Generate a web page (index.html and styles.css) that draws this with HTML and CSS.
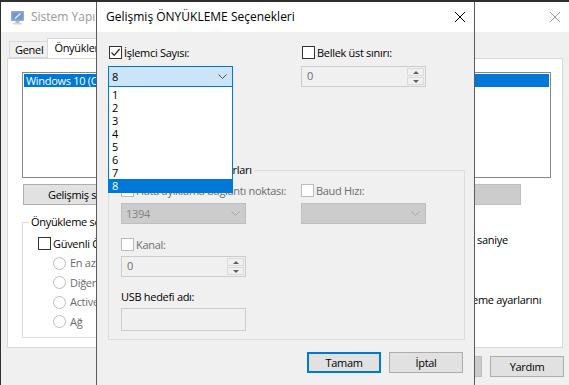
FILE: index.html
```html
<!DOCTYPE html>
<html lang="tr">
<head>
    <meta charset="UTF-8">
    <title>Sistem Yapılandırması - Gelişmiş ÖNYÜKLEME Seçenekleri</title>
    <link rel="stylesheet" href="styles.css">
</head>
<body>
<div class="desk">

    <!-- Arkadaki pencere: Sistem Yapılandırması -->
    <div class="win win-back">
        <div class="titlebar">
            <svg class="app-icon" width="15" height="15" viewBox="0 0 15 15">
                <rect x="1" y="1" width="13" height="10" rx="1" fill="#7d8aa0"/>
                <rect x="2.5" y="2.5" width="10" height="7" fill="#3a76d6"/>
                <path d="M5 8.5 L10.5 3.5" stroke="#e4eeff" stroke-width="1.3"/>
                <rect x="5.5" y="11" width="4" height="2" fill="#9aa3ad"/>
                <rect x="3" y="13" width="9" height="1.5" fill="#c5cad0"/>
            </svg>
            <span class="title">Sistem Yapılandırması</span>
            <svg class="close" width="10" height="10" viewBox="0 0 10 10">
                <path d="M0 0 L10 10 M10 0 L0 10" stroke="currentColor" stroke-width="1"/>
            </svg>
        </div>
        <div class="back-body">
            <div class="tabs">
                <div class="tab">Genel</div>
                <div class="tab active">Önyükleme</div>
            </div>
            <div class="page">
                <div class="listbox">
                    <div class="list-row sel">Windows 10 (C:)</div>
                </div>
                <div class="page-buttons">
                    <button class="btn adv">Gelişmiş seçenekler...</button>
                    <button class="btn del" disabled>Sil</button>
                </div>
                <div class="boot-area">
                    <fieldset class="group boot-group">
                        <legend>Önyükleme seçenekleri</legend>
                        <div class="boot-list">
                            <label class="chk"><span class="box"></span>Güvenli Önyükleme</label>
                            <label class="rad off"><span class="radio"></span>En az</label>
                            <label class="rad off"><span class="radio"></span>Diğer kabuk</label>
                            <label class="rad off"><span class="radio"></span>Active Directory onarımı</label>
                            <label class="rad off"><span class="radio"></span>Ağ</label>
                        </div>
                    </fieldset>
                    <div class="timeout">
                        <div class="timeout-row">
                            <div class="txt white"></div>
                            <span>saniye</span>
                        </div>
                        <div class="perm">
                            <span class="box"></span>
                            <span class="perm-text">Tüm önyükleme ayarlarını<br>kalıcı yap</span>
                        </div>
                    </div>
                </div>
            </div>
            <div class="win-buttons">
                <button class="btn">Tamam</button>
                <button class="btn">İptal</button>
                <button class="btn" disabled>Uygula</button>
                <button class="btn">Yardım</button>
            </div>
        </div>
    </div>

    <!-- Öndeki iletişim kutusu -->
    <div class="win dlg">
        <div class="titlebar">
            <span class="title">Gelişmiş ÖNYÜKLEME Seçenekleri</span>
            <svg class="close" width="10" height="10" viewBox="0 0 10 10">
                <path d="M0 0 L10 10 M10 0 L0 10" stroke="currentColor" stroke-width="1"/>
            </svg>
        </div>
        <div class="dlg-body">
            <div class="top">
                <div class="field">
                    <label class="chk">
                        <span class="box">
                            <svg width="11" height="11" viewBox="0 0 11 11"><path d="M1.5 5.5 L4.2 8.3 L9.6 2" fill="none" stroke="#222" stroke-width="1.2"/></svg>
                        </span>İşlemci Sayısı:
                    </label>
                    <div class="combo open">
                        <span>8</span>
                        <svg width="9" height="5" viewBox="0 0 9 5"><path d="M0.5 0.5 L4.5 4.5 L8.5 0.5" fill="none" stroke="#505050"/></svg>
                        <div class="drop">
                            <div>1</div>
                            <div>2</div>
                            <div>3</div>
                            <div>4</div>
                            <div>5</div>
                            <div>6</div>
                            <div>7</div>
                            <div class="sel">8</div>
                        </div>
                    </div>
                </div>
                <div class="field">
                    <label class="chk"><span class="box"></span>Bellek üst sınırı:</label>
                    <div class="spin off">
                        <span>0</span>
                        <div class="spin-btns"><i class="up"></i><i class="down"></i></div>
                    </div>
                </div>
            </div>

            <fieldset class="group debug-group">
                <legend>Genel hata ayıklama ayarları</legend>
                <div class="debug-grid">
                    <div class="col">
                        <label class="chk off"><span class="box"></span>Hata ayıklama bağlantı noktası:</label>
                        <div class="combo off">
                            <span>1394</span>
                            <svg width="9" height="5" viewBox="0 0 9 5"><path d="M0.5 0.5 L4.5 4.5 L8.5 0.5" fill="none" stroke="#a6a6a6"/></svg>
                        </div>
                        <label class="chk off kanal"><span class="box"></span>Kanal:</label>
                        <div class="spin off">
                            <span>0</span>
                            <div class="spin-btns"><i class="up"></i><i class="down"></i></div>
                        </div>
                        <div class="line usb">USB hedefi adı:</div>
                        <div class="txt"></div>
                    </div>
                    <div class="col">
                        <label class="chk off"><span class="box"></span>Baud Hızı:</label>
                        <div class="combo off">
                            <span></span>
                            <svg width="9" height="5" viewBox="0 0 9 5"><path d="M0.5 0.5 L4.5 4.5 L8.5 0.5" fill="none" stroke="#a6a6a6"/></svg>
                        </div>
                    </div>
                </div>
            </fieldset>

            <div class="dlg-buttons">
                <button class="btn def">Tamam</button>
                <button class="btn">İptal</button>
            </div>
        </div>
    </div>

</div>
</body>
</html>
```

FILE: styles.css
```css
* { box-sizing: border-box; }
body { margin: 0; font: 11px/14px "Segoe UI", "Open Sans", sans-serif; letter-spacing: -0.3px; color: #000; }

.desk { position: relative; width: 569px; height: 385px; background: #2f2f2f; overflow: hidden; }

/* pencereler masaüstünde serbest durur */
.win { position: absolute; top: 2px; height: 383px; background: #f0f0f0; }
.win-back { left: 1px; width: 568px; z-index: 1; }
.dlg { left: 96px; width: 379px; z-index: 2; border-left: 1px solid #5a5a5a; border-right: 1px solid #5a5a5a; }

.titlebar { height: 30px; background: #fff; display: flex; align-items: center; font-size: 12px; letter-spacing: 0; }
.titlebar .title { flex: 1; }
.win-back .titlebar { padding: 0 9px 0 9px; color: #999; }
.win-back .app-icon { margin-right: 6px; opacity: .75; }
.dlg .titlebar { padding: 0 9px; }
.close { display: block; }

/* kontroller */
.group { margin: 0; border: 1px solid #dcdcdc; min-width: 0; }
.group legend { padding: 0 2px; line-height: 14px; }
.line { height: 14px; }

.chk, .rad { display: flex; align-items: center; gap: 2px; height: 13px; white-space: nowrap; }
.box { width: 13px; height: 13px; flex: none; border: 1px solid #333; background: #fff; display: flex; align-items: center; justify-content: center; }
.radio { width: 13px; height: 13px; flex: none; border: 1px solid #bcbcbc; border-radius: 50%; background: #fff; margin-right: 2px; }
.chk.off, .rad.off { color: #6d6d6d; }
.chk.off .box { border-color: #bcbcbc; }

.combo { position: relative; width: 125px; height: 21px; border: 1px solid #adadad; background: #e1e1e1; display: flex; align-items: center; justify-content: space-between; padding: 0 5px 0 3px; }
.combo.open { border-color: #0078d7; background: #cce4f7; }
.combo.off { border-color: #bfbfbf; background: #cccccc; color: #838383; padding-left: 4px; }
.drop { position: absolute; top: calc(100% + 1px); left: -1px; width: 125px; border: 1px solid #0078d7; border-top: 0; background: #fff; padding-top: 1px; z-index: 5; }
.drop div { height: 13px; line-height: 13px; padding-left: 3px; }
.drop .sel { background: #0078d7; color: #fff; }

.spin { width: 125px; height: 21px; border: 1px solid #cccccc; background: #f0f0f0; display: flex; }
.spin span { flex: 1; padding-left: 5px; line-height: 18px; color: #6d6d6d; }
.spin-btns { width: 18px; display: flex; flex-direction: column; padding: 1px 1px 1px 0; gap: 1px; }
.spin-btns i { flex: 1; border: 1px solid #dadada; display: flex; align-items: center; justify-content: center; }
.spin-btns i::after { content: ""; border: 3px solid transparent; }
.spin-btns .up::after { border-bottom: 3px solid #606060; border-top: 0; }
.spin-btns .down::after { border-top: 3px solid #606060; border-bottom: 0; }

.txt { width: 125px; height: 23px; border: 1px solid #cccccc; background: #f0f0f0; }
.txt.white { background: #fff; border-color: #7a7a7a; }

.btn { width: 74px; height: 21px; padding: 0; border: 1px solid #adadad; background: #e1e1e1; font: inherit; letter-spacing: inherit; color: #000; }
.btn.def { border: 2px solid #0078d7; }
.btn:disabled { border-color: #bfbfbf; background: #cccccc; color: #838383; }

/* arka pencere */
.back-body { padding-top: 6px; }
.tabs { display: flex; align-items: flex-end; height: 20px; margin-left: 8px; }
.tab { height: 17px; padding: 0 4px 0 5px; border: 1px solid #d9d9d9; border-right: 0; line-height: 15px; }
.tab.active { height: 21px; width: 80px; margin-bottom: -1px; padding: 0 6px; background: #fff; border-right: 1px solid #d9d9d9; position: relative; z-index: 1; line-height: 18px; }
.page { margin-left: 6px; width: 556px; height: 290px; background: #fff; border: 1px solid #d9d9d9; padding: 13px 11px 0 14px; }
.listbox { width: 529px; height: 106px; border: 1px solid #828790; padding: 1px; }
.list-row { height: 13px; line-height: 13px; padding-left: 2px; }
.list-row.sel { background: #0078d7; color: #fff; }

.page-buttons { display: flex; margin-top: 6px; }
.page-buttons .adv { width: 153px; margin-left: 1px; }
.page-buttons .del { width: 120px; margin-left: auto; margin-right: 30px; }

.boot-area { display: grid; grid-template-columns: 362px 1fr; column-gap: 7px; margin-top: 10px; }
.boot-group { height: 123px; padding: 8px 10px 0 15px; }
.boot-group legend { margin-left: -9px; }
.boot-list { display: grid; grid-auto-rows: 13px; row-gap: 6.5px; }
.boot-list .rad { margin-left: 15px; }
.timeout { padding-top: 14px; }
.timeout-row { display: flex; align-items: center; gap: 7px; }
.timeout-row .txt { width: 79px; height: 21px; }
.perm { display: grid; grid-template-columns: 13px auto; column-gap: 2px; align-items: start; margin: 43px 0 0 9px; }
.perm-text { color: #000; }

.win-buttons { display: flex; justify-content: flex-end; gap: 8px; margin-top: 8px; padding-right: 5px; }

/* iletişim kutusu */
.dlg-body { padding: 14px 11px 0 11px; }
.top { display: grid; grid-template-columns: 125px 125px; column-gap: 68px; }
.field { display: flex; flex-direction: column; gap: 7px; }
.field .chk { margin-left: 1px; }

.debug-group { width: 357px; height: 177px; margin-top: 76px; padding: 7px 0 0 12px; }
.debug-group legend { margin-left: -8px; }
.debug-grid { display: grid; grid-template-columns: 125px 125px; column-gap: 55px; }
.col { display: flex; flex-direction: column; }
.col .combo { margin-top: 6px; }
.col .kanal { margin-top: 14px; }
.col .spin { margin-top: 5px; }
.col .usb { margin-top: 13px; color: #000; }
.col .txt { margin-top: 4px; }

.dlg-buttons { display: flex; justify-content: flex-end; gap: 8px; margin-top: 12px; }
```
